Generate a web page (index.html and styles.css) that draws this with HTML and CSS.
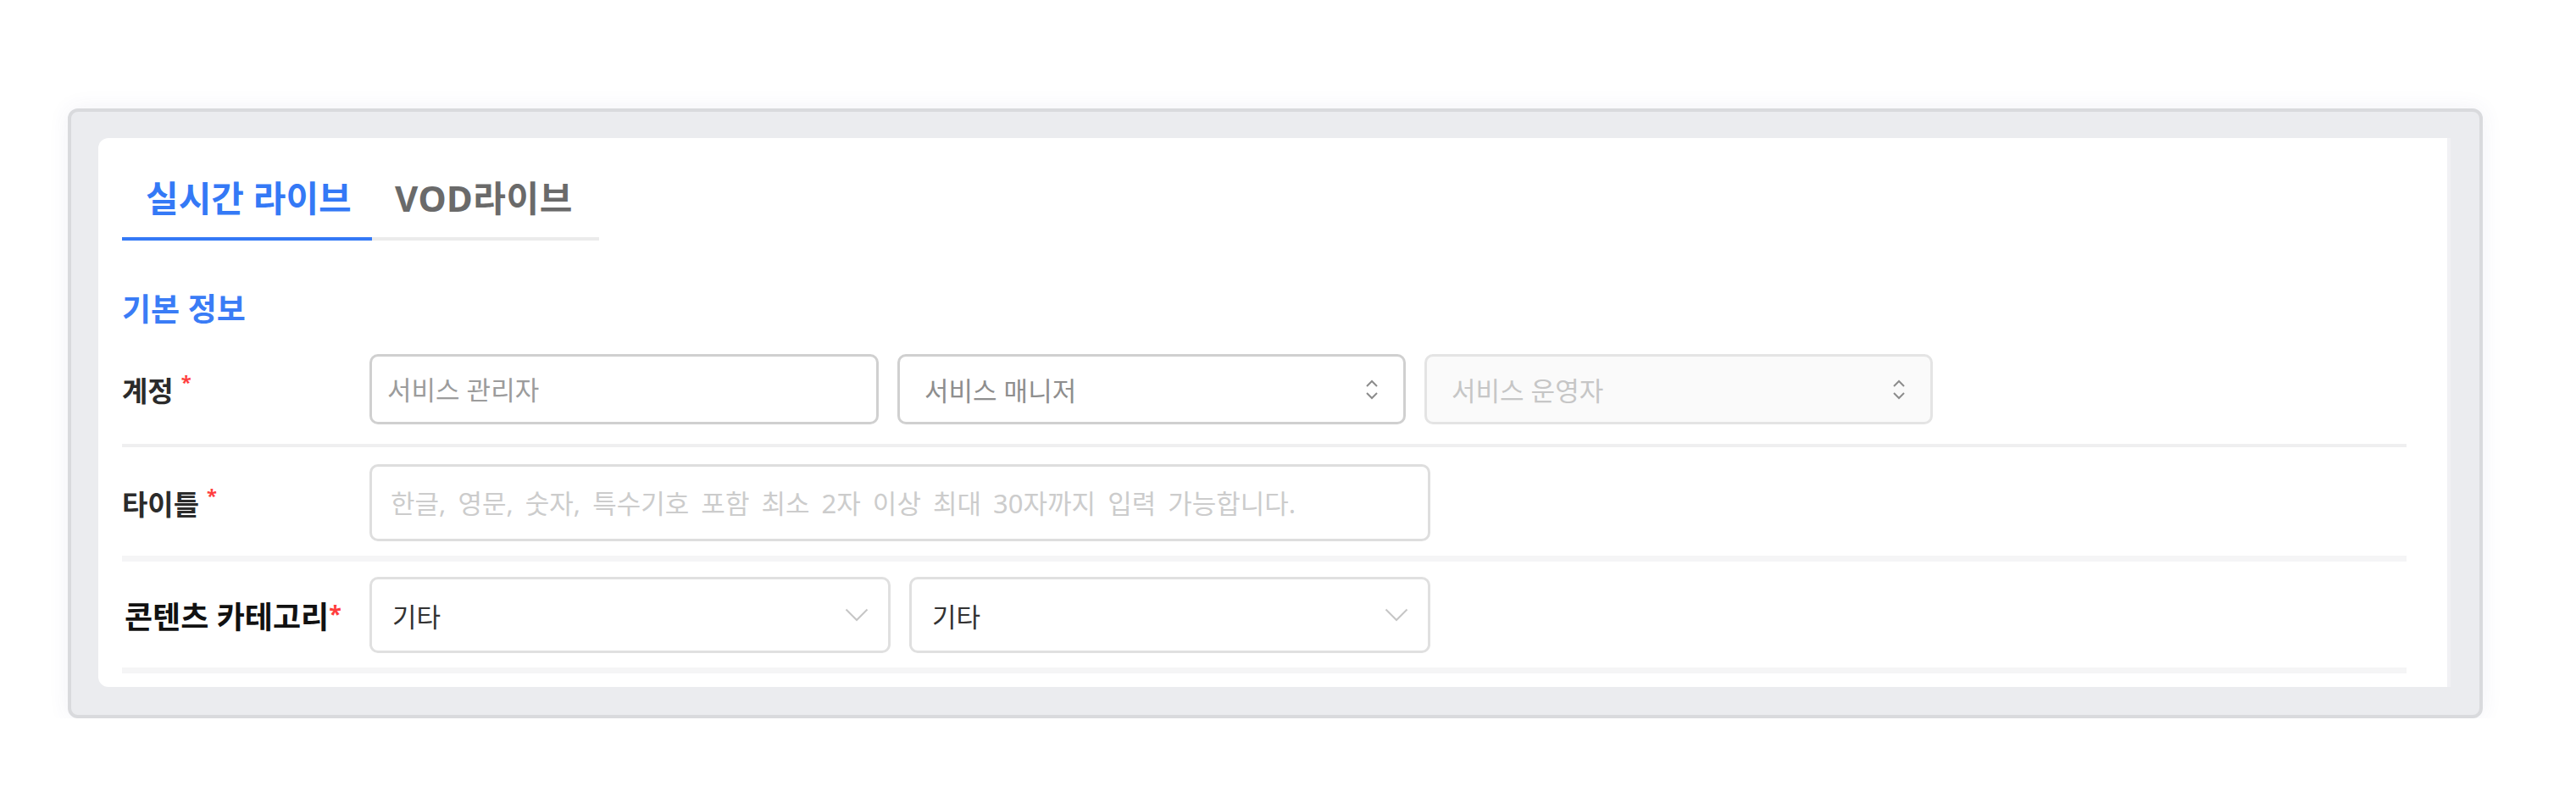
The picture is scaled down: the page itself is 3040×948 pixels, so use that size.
FILE: index.html
```html
<!DOCTYPE html>
<html lang="ko">
<head>
<meta charset="utf-8">
<title>라이브 등록</title>
<link rel="stylesheet" href="styles.css">
</head>
<body>
<div class="page">
  <div class="panel">
    <div class="card">
      <div class="tabs">
        <div class="tab tab-live active">실시간 라이브</div>
        <div class="tab tab-vod">VOD라이브</div>
      </div>
      <div class="section-title">기본 정보</div>

      <div class="row row-account">
        <div class="label">계정<span class="req">*</span></div>
        <div class="controls controls-3">
          <input class="field" type="text" placeholder="서비스 관리자">
          <div class="select select-updown"><span class="sel-text">서비스 매니저</span>
            <svg class="updown" width="16" height="24" viewBox="0 0 16 24"><path d="M2 8 L8 2 L14 8" fill="none" stroke="#8c8c8c" stroke-width="2"/><path d="M2 16 L8 22 L14 16" fill="none" stroke="#8c8c8c" stroke-width="2"/></svg>
          </div>
          <div class="select select-updown disabled"><span class="sel-text">서비스 운영자</span>
            <svg class="updown" width="16" height="24" viewBox="0 0 16 24"><path d="M2 8 L8 2 L14 8" fill="none" stroke="#8c8c8c" stroke-width="2"/><path d="M2 16 L8 22 L14 16" fill="none" stroke="#8c8c8c" stroke-width="2"/></svg>
          </div>
        </div>
      </div>

      <div class="row row-title">
        <div class="label">타이틀<span class="req">*</span></div>
        <div class="controls">
          <input class="field field-wide" type="text" placeholder="한글, 영문, 숫자, 특수기호 포함 최소 2자 이상 최대 30자까지 입력 가능합니다.">
        </div>
      </div>

      <div class="row row-cat">
        <div class="label label-lg">콘텐츠 카테고리<span class="req req-tight">*</span></div>
        <div class="controls controls-2">
          <div class="select select-chev"><span class="sel-text val">기타</span>
            <svg class="chev" width="28" height="16" viewBox="0 0 28 16"><path d="M1.5 1.5 L14 14 L26.5 1.5" fill="none" stroke="#c6c6c6" stroke-width="2"/></svg>
          </div>
          <div class="select select-chev"><span class="sel-text val">기타</span>
            <svg class="chev" width="28" height="16" viewBox="0 0 28 16"><path d="M1.5 1.5 L14 14 L26.5 1.5" fill="none" stroke="#c6c6c6" stroke-width="2"/></svg>
          </div>
        </div>
      </div>
    </div>
  </div>
</div>
</body>
</html>
```

FILE: styles.css
```css
* { box-sizing: border-box; }

html, body {
  margin: 0;
  background: #ffffff;
  font-family: "Noto Sans", "Noto Sans CJK KR", sans-serif;
}

.page {
  padding: 128px 0 0 80px;
}

.panel {
  width: 2850px;
  height: 720px;
  background: #ebecef;
  border: 4px solid #d9dadd;
  border-radius: 12px;
  padding: 31px 34px 33px 32px;
  box-shadow: 0 0 26px rgba(70, 70, 140, 0.07);
}

.card {
  height: 648px;
  background: #ffffff;
  border-radius: 12px 0 0 12px;
  border-right: 4px solid #f1f1f4;
  padding: 25px 48px 0 28px;
}

.tabs {
  display: flex;
}

.tab {
  font-size: 42px;
  font-weight: 700;
  line-height: 56px;
  padding: 18px 0;
  border-bottom: 4px solid #ebebeb;
  color: #6a6a6a;
  white-space: nowrap;
}

.tab-live {
  width: 295px;
  padding-left: 28px;
}

.tab-vod {
  width: 268px;
  padding-left: 27px;
  letter-spacing: 0.5px;
}

.tab.active {
  color: #3479f6;
  border-bottom-color: #3479f6;
}

.section-title {
  margin-top: 57px;
  font-size: 37px;
  line-height: 48px;
  font-weight: 700;
  color: #3a7cf6;
}

.row {
  display: flex;
  align-items: center;
}

.row-account {
  padding: 29px 0 23px;
  border-bottom: 4px solid #efeff0;
}

.row-title {
  padding: 20px 0 17px;
  border-bottom: 7px solid #f5f5f6;
}

.row-cat {
  padding: 18px 0 17px;
  border-bottom: 7px solid #f5f5f6;
}

.label {
  width: 292px;
  flex: none;
  font-size: 33px;
  font-weight: 700;
  color: #2b2b2b;
  white-space: nowrap;
}

.label-lg {
  font-size: 36px;
  color: #111111;
  padding-left: 3px;
}

.req {
  color: #ff3d3d;
  font-size: 22px;
  margin-left: 9px;
  vertical-align: 15px;
}

.req-tight {
  font-size: 27px;
  margin-left: 0;
  vertical-align: 7px;
}

.controls {
  display: flex;
}

.controls-3 {
  display: grid;
  grid-template-columns: 601px 600px 600px;
  column-gap: 22px;
}

.controls-2 {
  display: grid;
  grid-template-columns: 615px 615px;
  column-gap: 22px;
}

.field {
  display: block;
  height: 83px;
  border: 3px solid #d0d0d0;
  border-radius: 10px;
  padding: 0 18px;
  font-family: "Noto Sans", "Noto Sans CJK KR", sans-serif;
  font-size: 31px;
  color: #333333;
  background: #ffffff;
  outline: none;
}

.field::placeholder {
  color: #9c9c9c;
}

.field-wide {
  width: 1252px;
  height: 91px;
  border-color: #dedede;
  padding-left: 22px;
}

.field-wide::placeholder {
  color: #cccccc;
  word-spacing: 6px;
}

.select {
  display: flex;
  align-items: center;
  justify-content: space-between;
  border: 3px solid #d0d0d0;
  border-radius: 10px;
  background: #ffffff;
  font-size: 31px;
}

.select-updown {
  height: 83px;
  padding: 0 29px 0 29px;
}

.select-updown .sel-text {
  color: #8e8e8e;
}

.select.disabled {
  background: #fafafa;
  border-color: #e4e4e4;
}

.select.disabled .sel-text {
  color: #c6c6c6;
}

.select-chev {
  height: 90px;
  border-color: #e0e0e0;
  padding: 0 23px 0 24px;
}

.sel-text.val {
  color: #333333;
}

.updown, .chev {
  flex: none;
  display: block;
}
```
